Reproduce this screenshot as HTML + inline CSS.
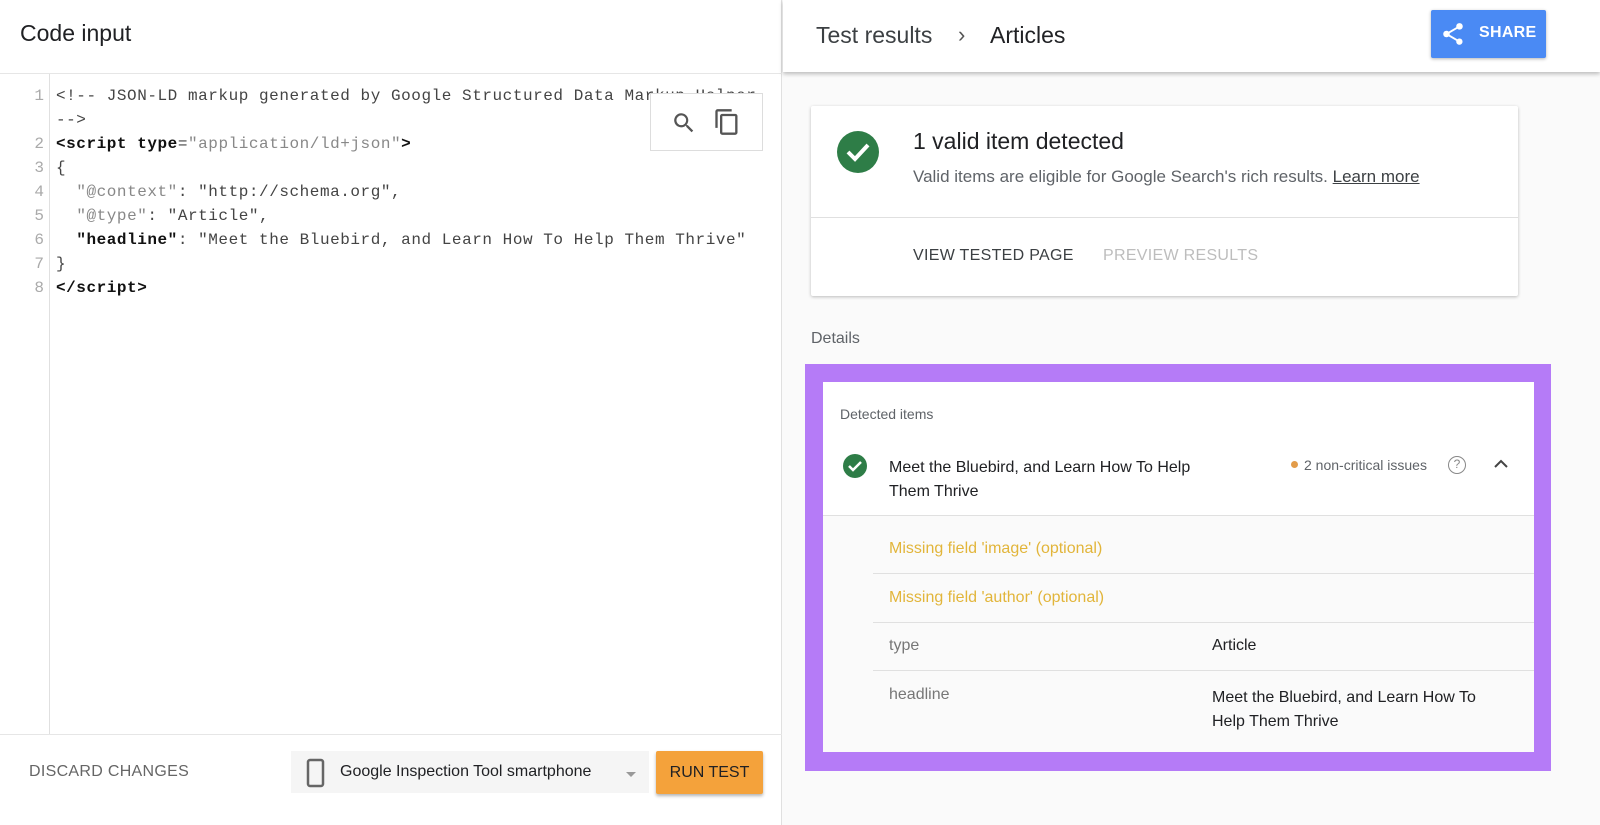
<!DOCTYPE html>
<html><head><style>
*{margin:0;padding:0;box-sizing:border-box}
body{width:1600px;height:825px;overflow:hidden;font-family:"Liberation Sans",sans-serif;background:#fafafa;position:relative;color:#202124}
.a{position:absolute;white-space:nowrap}
.code{font-family:"Liberation Mono",monospace;font-size:16px;letter-spacing:0.55px;color:#444;line-height:24px}
.ln{color:#aaa;text-align:right;width:36px;font-family:"Liberation Mono",monospace;font-size:16px;line-height:24px}
.g{color:#888}
b{font-weight:bold;color:#111}
</style></head><body>
<div class="a" style="left:0;top:0;width:782px;height:825px;background:#fff;border-right:1px solid #e0e0e0"></div>
<div class="a" style="left:20px;top:20px;font-size:23px;color:#202124">Code input</div>
<div class="a" style="left:0;top:73px;width:782px;height:1px;background:#e6e6e6"></div>
<div class="a" style="left:49px;top:74px;width:1px;height:660px;background:#e0e0e0"></div>
<div class="a" style="left:8px;top:84px">
<div class="ln">1</div><div class="ln">&nbsp;</div><div class="ln">2</div><div class="ln">3</div><div class="ln">4</div><div class="ln">5</div><div class="ln">6</div><div class="ln">7</div><div class="ln">8</div></div>
<div class="a code" style="left:56px;top:84px;width:726px;overflow:hidden">
<div>&lt;!-- JSON-LD markup generated by Google Structured Data Markup Helper</div>
<div>--&gt;</div>
<div><b>&lt;script type</b>=<span class="g">"application/ld+json"</span><b>&gt;</b></div>
<div>{</div>
<div>&nbsp;&nbsp;<span class="g">"@context"</span>: "http://schema.org",</div>
<div>&nbsp;&nbsp;<span class="g">"@type"</span>: "Article",</div>
<div>&nbsp;&nbsp;<b>"headline"</b>: "Meet the Bluebird, and Learn How To Help Them Thrive"</div>
<div>}</div>
<div><b>&lt;/script&gt;</b></div>
</div>
<div class="a" style="left:650px;top:93px;width:113px;height:58px;background:#fff;border:1px solid #ddd">
<svg style="position:absolute;left:20px;top:16px" width="26" height="26" viewBox="0 0 24 24"><path fill="#555" d="M15.5 14h-.8l-.3-.3A6.5 6.5 0 1 0 9.5 16a6.5 6.5 0 0 0 4.2-1.6l.3.3v.8l5 5 1.5-1.5-5-5zm-6 0a4.5 4.5 0 1 1 0-9 4.5 4.5 0 0 1 0 9z"/></svg>
<svg style="position:absolute;left:62px;top:14px" width="28" height="28" viewBox="0 0 24 24"><path fill="#555" d="M16 1H4a2 2 0 0 0-2 2v14h2V3h12V1zm3 4H8a2 2 0 0 0-2 2v14a2 2 0 0 0 2 2h11a2 2 0 0 0 2-2V7a2 2 0 0 0-2-2zm0 16H8V7h11v14z"/></svg>
</div>
<div class="a" style="left:0;top:734px;width:782px;height:1px;background:#e6e6e6"></div>
<div class="a" style="left:29px;top:763px;font-size:16px;color:#666;letter-spacing:0.3px">DISCARD CHANGES</div>
<div class="a" style="left:291px;top:751px;width:358px;height:42px;background:#f5f5f5"></div>
<svg class="a" style="left:304px;top:758px" width="24" height="30" viewBox="0 0 24 30"><rect x="4" y="2" width="15" height="26" rx="2" fill="none" stroke="#666" stroke-width="2.5"/></svg>
<div class="a" style="left:340px;top:763px;font-size:16px;color:#202124">Google Inspection Tool smartphone</div>
<div class="a" style="left:626px;top:772px;width:0;height:0;border-left:5px solid transparent;border-right:5px solid transparent;border-top:5px solid #999"></div>
<div class="a" style="left:656px;top:751px;width:107px;height:43px;background:#f4a23b;border-radius:2px;box-shadow:0 2px 3px rgba(0,0,0,.3);font-size:16px;color:#202124;text-align:center;line-height:43px">RUN TEST</div>
<div class="a" style="left:783px;top:0;width:817px;height:72px;background:#fff;box-shadow:0 2px 4px rgba(0,0,0,.25)"></div>
<div class="a" style="left:816px;top:22px;font-size:23px;color:#3c4043">Test results</div>
<div class="a" style="left:958px;top:22px;font-size:22px;color:#555">›</div>
<div class="a" style="left:990px;top:22px;font-size:23px;color:#202124">Articles</div>
<div class="a" style="left:1431px;top:10px;width:115px;height:48px;background:#4a8af4;border-radius:2px;box-shadow:0 1px 3px rgba(0,0,0,.3)">
<svg style="position:absolute;left:9px;top:11px" width="26" height="26" viewBox="0 0 24 24"><path fill="#fff" d="M18 16.1c-.8 0-1.4.3-2 .8l-7.1-4.2c.1-.2.1-.5.1-.7s0-.5-.1-.7L16 7.2c.5.5 1.2.8 2 .8 1.7 0 3-1.3 3-3s-1.3-3-3-3-3 1.3-3 3c0 .2 0 .5.1.7L8 9.8C7.5 9.3 6.8 9 6 9c-1.7 0-3 1.3-3 3s1.3 3 3 3c.8 0 1.5-.3 2-.8l7.1 4.2c-.1.2-.1.4-.1.6 0 1.6 1.3 2.9 2.9 2.9s2.9-1.3 2.9-2.9-1.2-2.9-2.8-2.9z"/></svg>
<div style="position:absolute;left:48px;top:14px;color:#fff;font-size:16px;font-weight:bold;letter-spacing:0.3px">SHARE</div></div>
<div class="a" style="left:811px;top:106px;width:707px;height:190px;background:#fff;box-shadow:0 1px 3px rgba(0,0,0,.25);border-radius:2px"></div>
<svg class="a" style="left:833px;top:130px" width="50" height="44" viewBox="0 0 50 44"><circle cx="25" cy="22" r="21" fill="#2e7d47"/><path d="M15 22l7 7 13-14" fill="none" stroke="#fff" stroke-width="4"/></svg>
<div class="a" style="left:913px;top:128px;font-size:23px;color:#202124">1 valid item detected</div>
<div class="a" style="left:913px;top:167px;font-size:17px;color:#5f6368">Valid items are eligible for Google Search's rich results. <span style="text-decoration:underline;color:#3c4043">Learn more</span></div>
<div class="a" style="left:811px;top:217px;width:707px;height:1px;background:#e0e0e0"></div>
<div class="a" style="left:913px;top:247px;font-size:16px;color:#3c4043;letter-spacing:0.3px">VIEW TESTED PAGE</div>
<div class="a" style="left:1103px;top:247px;font-size:16px;color:#bdbdbd;letter-spacing:0.3px">PREVIEW RESULTS</div>
<div class="a" style="left:811px;top:330px;font-size:16px;color:#5f6368">Details</div>
<div class="a" style="left:805px;top:364px;width:746px;height:407px;background:#b57bf7"></div>
<div class="a" style="left:823px;top:382px;width:711px;height:370px;background:#fafafa"></div>
<div class="a" style="left:823px;top:382px;width:711px;height:134px;background:#fff;border-bottom:1px solid #e0e0e0"></div>
<div class="a" style="left:840px;top:406px;font-size:14px;color:#5f6368">Detected items</div>
<svg class="a" style="left:842px;top:453px" width="26" height="26" viewBox="0 0 26 26"><circle cx="13" cy="13" r="12" fill="#2e7d47"/><path d="M7 13l4 4 8-8" fill="none" stroke="#fff" stroke-width="2.5"/></svg>
<div class="a" style="left:889px;top:456px;font-size:16px;line-height:24px;color:#202124">Meet the Bluebird, and Learn How To Help<br>Them Thrive</div>
<div class="a" style="left:1291px;top:461px;width:7px;height:7px;border-radius:50%;background:#e39c4a"></div>
<div class="a" style="left:1304px;top:457px;font-size:14px;color:#5f6368">2 non-critical issues</div>
<div class="a" style="left:1448px;top:456px;width:18px;height:18px;border:1.5px solid #888;border-radius:50%;font-size:12px;color:#888;text-align:center;line-height:15px">?</div>
<svg class="a" style="left:1492px;top:457px" width="18" height="14" viewBox="0 0 18 14"><path d="M3 10l6-6 6 6" fill="none" stroke="#444" stroke-width="2"/></svg>
<div class="a" style="left:889px;top:540px;font-size:16px;color:#e2b53a">Missing field 'image' (optional)</div>
<div class="a" style="left:873px;top:573px;width:661px;height:1px;background:#e0e0e0"></div>
<div class="a" style="left:889px;top:589px;font-size:16px;color:#e2b53a">Missing field 'author' (optional)</div>
<div class="a" style="left:873px;top:622px;width:661px;height:1px;background:#e0e0e0"></div>
<div class="a" style="left:889px;top:637px;font-size:16px;color:#777">type</div>
<div class="a" style="left:1212px;top:637px;font-size:16px;color:#202124">Article</div>
<div class="a" style="left:873px;top:670px;width:661px;height:1px;background:#e0e0e0"></div>
<div class="a" style="left:889px;top:686px;font-size:16px;color:#777">headline</div>
<div class="a" style="left:1212px;top:686px;font-size:16px;line-height:24px;color:#202124">Meet the Bluebird, and Learn How To<br>Help Them Thrive</div>
</body></html>
